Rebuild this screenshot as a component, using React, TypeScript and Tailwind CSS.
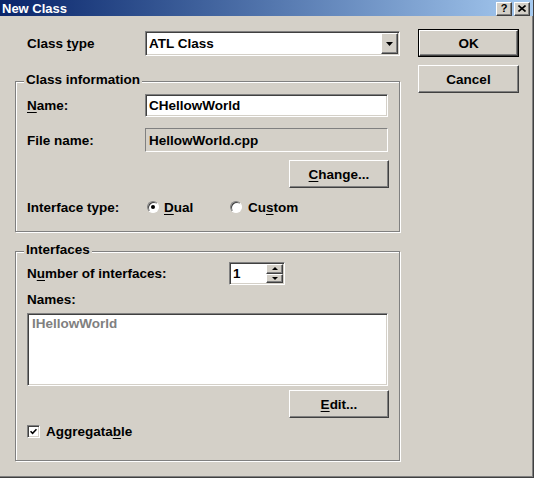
import React from 'react';

const raised =
  'border border-t-white border-l-white border-r-[#404040] border-b-[#404040] shadow-[inset_-1px_-1px_0_#808080]';
const sunken =
  'border border-t-[#808080] border-l-[#808080] border-r-white border-b-white shadow-[inset_1px_1px_0_#404040,inset_-1px_-1px_0_#d4d0c8] p-[1px]';
const etched =
  'relative border border-[#808080] shadow-[inset_1px_1px_0_#ffffff,1px_1px_0_#ffffff]';

const U: React.FC<{ children: React.ReactNode }> = ({ children }) => (
  <span className="underline decoration-1 underline-offset-[2px]">{children}</span>
);

const Button: React.FC<{ children: React.ReactNode; isDefault?: boolean; className?: string }> = ({
  children,
  isDefault,
  className = '',
}) => {
  if (isDefault) {
    return (
      <div className={`border border-black ${className}`}>
        <div className={`${raised} w-full h-full flex items-center justify-center`}>{children}</div>
      </div>
    );
  }
  return <div className={`${raised} flex items-center justify-center ${className}`}>{children}</div>;
};

const DownArrow = () => (
  <div className="w-0 h-0 border-x-[3px] border-x-transparent border-t-[3px] border-t-black" />
);
const UpArrow = () => (
  <div className="w-0 h-0 border-x-[3px] border-x-transparent border-b-[3px] border-b-black" />
);

const Radio: React.FC<{ checked?: boolean }> = ({ checked }) => (
  <div className="w-[12px] h-[12px] rounded-full border border-t-[#808080] border-l-[#808080] border-r-white border-b-white shadow-[inset_1px_1px_0_#404040] bg-white flex items-center justify-center">
    {checked && <div className="w-[4px] h-[4px] rounded-full bg-black" />}
  </div>
);

const GroupBox: React.FC<{ title: string; className?: string; children: React.ReactNode }> = ({
  title,
  className = '',
  children,
}) => (
  <div className={`${etched} ${className}`}>
    <span className="absolute left-[8px] top-[-10px] px-[2px] bg-[#d4d0c8]">{title}</span>
    {children}
  </div>
);

export default function App() {
  return (
    <div className="w-[534px] h-[478px] bg-[#d4d0c8] border-r border-b border-[#404040] shadow-[inset_-1px_-1px_0_#808080] overflow-hidden font-['Liberation_Sans',Arial,sans-serif] text-[13.5px] leading-[15px] font-bold text-black select-none">
      {/* title bar */}
      <div className="h-[16px] flex items-center bg-linear-to-r from-[#0a246a] to-[#a6caf0] pl-[2px] pr-[3px]">
        <span className="text-white text-[13px]">New Class</span>
        <div className="ml-auto flex gap-[2px] pt-[1px]">
          <div className={`${raised} bg-[#d4d0c8] w-[16px] h-[14px] flex items-center justify-center text-[11px] leading-none`}>
            ?
          </div>
          <div className={`${raised} bg-[#d4d0c8] w-[16px] h-[14px] flex items-center justify-center`}>
            <svg width="8" height="7" viewBox="0 0 8 7">
              <path d="M0.5 0.5L7.5 6.5M7.5 0.5L0.5 6.5" stroke="black" strokeWidth="1.6" />
            </svg>
          </div>
        </div>
      </div>

      <div className="flex">
        {/* left column */}
        <div className="ml-[15px] w-[385px]">
          <div className="mt-[15px] h-[25px] flex items-center">
            <div className="w-[130px] pl-[12px]">
              Class <U>t</U>ype
            </div>
            <div className={`${sunken} w-[255px] h-[25px] bg-white flex`}>
              <div className="flex-1 flex items-center pl-[2px]">ATL Class</div>
              <div className={`${raised} bg-[#d4d0c8] w-[17px] flex items-center justify-center`}>
                <svg width="7" height="4" viewBox="0 0 7 4">
                  <path d="M0 0H7L3.5 4Z" fill="black" />
                </svg>
              </div>
            </div>
          </div>

          <GroupBox title="Class information" className="mt-[25px] h-[151px]">
            <div className="mt-[12px] h-[23px] flex items-center">
              <div className="w-[129px] pl-[11px]">
                <U>N</U>ame:
              </div>
              <div className={`${sunken} w-[243px] h-[23px] bg-white flex items-center pl-[3px]`}>CHellowWorld</div>
            </div>
            <div className="mt-[11px] h-[24px] flex items-center">
              <div className="w-[129px] pl-[11px]">File name:</div>
              <div className="w-[243px] h-[24px] border border-t-[#808080] border-l-[#808080] border-r-white border-b-white flex items-center pl-[3px]">
                HellowWorld.cpp
              </div>
            </div>
            <div className="mt-[8px] flex">
              <Button className="ml-[273px] w-[100px] h-[28px]">
                <span>
                  <U>C</U>hange...
                </span>
              </Button>
            </div>
            <div className="mt-[11px] h-[16px] flex items-center">
              <div className="w-[129px] pl-[11px]">Interface type:</div>
              <div className="ml-[2px] w-[83px] flex items-center gap-[5px]">
                <Radio checked />
                <span>
                  <U>D</U>ual
                </span>
              </div>
              <div className="flex items-center gap-[6px]">
                <Radio />
                <span>
                  Cu<U>s</U>tom
                </span>
              </div>
            </div>
          </GroupBox>

          <GroupBox title="Interfaces" className="mt-[19px] h-[210px]">
            <div className="mt-[10px] h-[23px] flex items-center">
              <div className="w-[213px] pl-[11px]">
                N<U>u</U>mber of interfaces:
              </div>
              <div className={`${sunken} w-[56px] h-[23px] bg-white flex`}>
                <div className="flex-1 flex items-center pl-[2px]">1</div>
                <div className="w-[17px] flex flex-col">
                  <div className={`${raised} bg-[#d4d0c8] flex-1 flex items-center justify-center`}>
                    <UpArrow />
                  </div>
                  <div className={`${raised} bg-[#d4d0c8] flex-1 flex items-center justify-center`}>
                    <DownArrow />
                  </div>
                </div>
              </div>
            </div>
            <div className="mt-[6px] h-[16px] flex items-center pl-[11px]">Names:</div>
            <div className={`${sunken} mt-[6px] ml-[11px] w-[361px] h-[73px] bg-white`}>
              <div className="pl-[3px] pt-[1px] text-[#808080]">IHellowWorld</div>
            </div>
            <div className="mt-[4px] flex">
              <Button className="ml-[273px] w-[100px] h-[28px]">
                <span>
                  <U>E</U>dit...
                </span>
              </Button>
            </div>
            <div className="mt-[7px] ml-[11px] h-[13px] flex items-center gap-[6px]">
              <div className={`${sunken} w-[13px] h-[13px] bg-white flex items-center justify-center`}>
                <svg width="7" height="7" viewBox="0 0 7 7">
                  <path d="M0.5 3.2L2.6 5.3L6.5 1.2" stroke="black" strokeWidth="1.6" fill="none" />
                </svg>
              </div>
              <span>
                Aggregata<U>b</U>le
              </span>
            </div>
          </GroupBox>
        </div>

        {/* right column */}
        <div className="ml-[18px] w-[101px]">
          <Button isDefault className="mt-[13px] h-[28px]">
            OK
          </Button>
          <Button className="mt-[8px] h-[28px]">Cancel</Button>
        </div>
      </div>
    </div>
  );
}
